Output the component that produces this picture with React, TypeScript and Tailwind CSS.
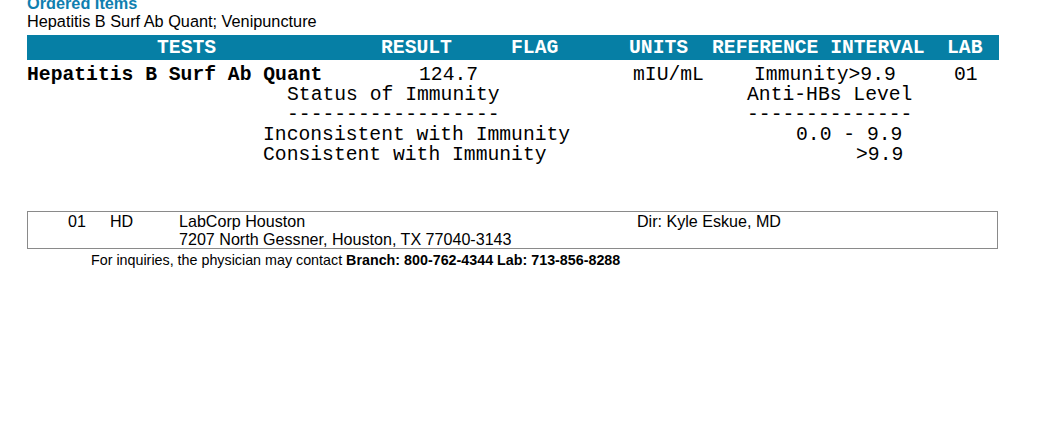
import React from 'react';

const mono = "font-['Liberation_Mono','Courier_New',monospace]";
const sans = "font-['Liberation_Sans',Arial,sans-serif]";

export default function App() {
  return (
    <div className={`min-h-screen w-full bg-white text-black ${sans} overflow-hidden`}>
      <div className="w-[972px] ml-[27px]">
        {/* Heading */}
        <div className="mt-[-6px] text-[16.3px] leading-[18px] font-bold text-[#0f7fb0]">Ordered Items</div>
        <div className="text-[16.3px] leading-[18px]">Hepatitis B Surf Ab Quant; Venipuncture</div>

        {/* Table header */}
        <div className={`mt-[5px] h-[25px] bg-[#067fa5] flex items-center text-white font-bold text-[19.7px] leading-[20px] ${mono} whitespace-pre`}>
          <span className="pl-[130px] w-[354px] shrink-0">TESTS</span>
          <span className="w-[130px] shrink-0">RESULT</span>
          <span className="w-[118px] shrink-0">FLAG</span>
          <span className="w-[83px] shrink-0">UNITS</span>
          <span className="w-[235px] shrink-0">REFERENCE INTERVAL</span>
          <span>LAB</span>
        </div>

        {/* Result rows */}
        <div className={`mt-[5px] text-[19.7px] leading-[20px] ${mono} whitespace-pre`}>
          <div className="flex">
            <span className="w-[392px] shrink-0 font-bold">Hepatitis B Surf Ab Quant</span>
            <span className="w-[214px] shrink-0">124.7</span>
            <span className="w-[121px] shrink-0">mIU/mL</span>
            <span className="w-[200px] shrink-0">Immunity&gt;9.9</span>
            <span>01</span>
          </div>
          <div className="flex pl-[260px]">
            <span className="w-[460px] shrink-0">Status of Immunity</span>
            <span>Anti-HBs Level</span>
          </div>
          <div className="flex pl-[260px]">
            <span className="w-[460px] shrink-0">------------------</span>
            <span>--------------</span>
          </div>
          <div className="flex pl-[236px]">
            <span className="w-[533px] shrink-0">Inconsistent with Immunity</span>
            <span>0.0 - 9.9</span>
          </div>
          <div className="flex pl-[236px]">
            <span className="w-[593px] shrink-0">Consistent with Immunity</span>
            <span>&gt;9.9</span>
          </div>
        </div>

        {/* Lab info box */}
        <div className="mt-[46px] w-[971px] border border-[#8a8a8a] flex text-[16.1px] leading-[18px]">
          <span className="pl-[40px] w-[82px] shrink-0">01</span>
          <span className="w-[69px] shrink-0">HD</span>
          <div className="w-[458px] shrink-0 flex flex-col">
            <span>LabCorp Houston</span>
            <span>7207 North Gessner, Houston, TX 77040-3143</span>
          </div>
          <span>Dir: Kyle Eskue, MD</span>
        </div>

        <div className="mt-[3px] pl-[64px] text-[14.3px] leading-[16px]">
          For inquiries, the physician may contact <span className="font-bold">Branch: 800-762-4344 Lab: 713-856-8288</span>
        </div>
      </div>
    </div>
  );
}
